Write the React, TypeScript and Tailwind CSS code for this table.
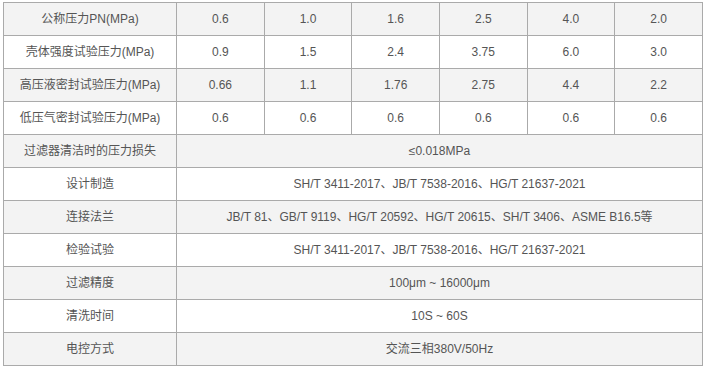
import React from "react";

const top: [string, string[]][] = [
  ["公称压力PN(MPa)", ["0.6", "1.0", "1.6", "2.5", "4.0", "2.0"]],
  ["壳体强度试验压力(MPa)", ["0.9", "1.5", "2.4", "3.75", "6.0", "3.0"]],
  ["高压液密封试验压力(MPa)", ["0.66", "1.1", "1.76", "2.75", "4.4", "2.2"]],
  ["低压气密封试验压力(MPa)", ["0.6", "0.6", "0.6", "0.6", "0.6", "0.6"]],
];

const bottom: [string, string][] = [
  ["过滤器清洁时的压力损失", "≤0.018MPa"],
  ["设计制造", "SH/T 3411-2017、JB/T 7538-2016、HG/T 21637-2021"],
  ["连接法兰", "JB/T 81、GB/T 9119、HG/T 20592、HG/T 20615、SH/T 3406、ASME B16.5等"],
  ["检验试验", "SH/T 3411-2017、JB/T 7538-2016、HG/T 21637-2021"],
  ["过滤精度", "100μm ~ 16000μm"],
  ["清洗时间", "10S ~ 60S"],
  ["电控方式", "交流三相380V/50Hz"],
];

const td = "border border-[#aaaaaa] h-[33px] p-0 text-center align-middle";

export default function App() {
  let idx = 0;
  return (
    <div className="w-[705px] h-[368px] bg-white pt-[2px] pl-[3px]">
      <table
        className="table-fixed border-collapse w-[700px] text-[12px] text-[#555555]"
        style={{ fontFamily: '"Liberation Sans", Arial, "Noto Sans CJK SC", sans-serif' }}
      >
        <colgroup>
          <col className="w-[173px]" />
          <col />
          <col />
          <col />
          <col />
          <col />
          <col />
        </colgroup>
        <tbody>
          {top.map(([label, vals]) => {
            const bg = idx++ % 2 === 0 ? "bg-[#f3f3f3]" : "bg-white";
            return (
              <tr key={label} className={bg}>
                <td className={td}>{label}</td>
                {vals.map((v, i) => (
                  <td key={i} className={td}>
                    {v}
                  </td>
                ))}
              </tr>
            );
          })}
          {bottom.map(([label, val]) => {
            const bg = idx++ % 2 === 0 ? "bg-[#f3f3f3]" : "bg-white";
            return (
              <tr key={label} className={bg}>
                <td className={td}>{label}</td>
                <td className={td} colSpan={6}>
                  {val}
                </td>
              </tr>
            );
          })}
        </tbody>
      </table>
    </div>
  );
}
